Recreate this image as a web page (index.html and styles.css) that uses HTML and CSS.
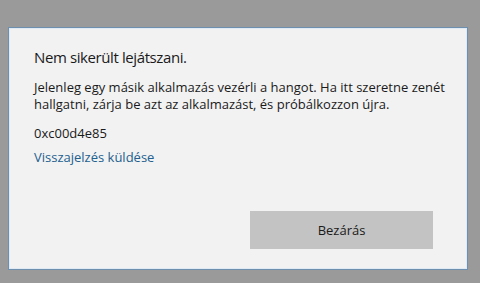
FILE: index.html
```html
<!DOCTYPE html>
<html>
<head>
<meta charset="UTF-8">
<title>Nem sikerült lejátszani</title>
<link rel="stylesheet" href="styles.css">
</head>
<body>
<div class="dialog">
  <div class="content">
    <h1 class="title">Nem sikerült lejátszani.</h1>
    <p class="message">Jelenleg egy másik alkalmazás vezérli a hangot. Ha itt szeretne zenét hallgatni, zárja be azt az alkalmazást, és próbálkozzon újra.</p>
    <p class="code">0xc00d4e85</p>
    <a class="feedback" href="#">Visszajelzés küldése</a>
  </div>
  <div class="actions">
    <button class="close">Bezárás</button>
  </div>
</div>
</body>
</html>
```

FILE: styles.css
```css
html, body {
  margin: 0;
  padding: 0;
  height: 100%;
}
body {
  background: #9a9a9a;
  font-family: "Open Sans", "Noto Sans", sans-serif;
  color: #1a1a1a;
  padding: 27px 12px 13px 8px;
  box-sizing: border-box;
}
.dialog {
  height: 243px;
  width: 460px;
  box-sizing: border-box;
  background: #f2f2f2;
  border: 1px solid #6f8fae;
  box-shadow: inset 0 0 0 1px #dfeaf4;
  display: flex;
  flex-direction: column;
  padding: 18px 34px 20px 25px;
}
.content {
  flex: 1;
}
.title {
  margin: 0;
  font-size: 15px;
  letter-spacing: -0.4px;
  font-weight: normal;
  line-height: 22px;
}
.message {
  margin: 11px 0 0;
  font-size: 13px;
  line-height: 17px;
  width: 420px;
}
.code {
  margin: 11px 0 0;
  font-size: 13px;
  line-height: 18px;
}
.feedback {
  display: block;
  margin-top: 6px;
  font-size: 13px;
  line-height: 18px;
  color: #22608f;
  text-decoration: none;
}
.actions {
  display: flex;
  justify-content: flex-end;
}
.close {
  width: 183px;
  height: 38px;
  border: none;
  background: #c3c3c3;
  font-family: inherit;
  font-size: 13px;
  color: #1a1a1a;
}
```
